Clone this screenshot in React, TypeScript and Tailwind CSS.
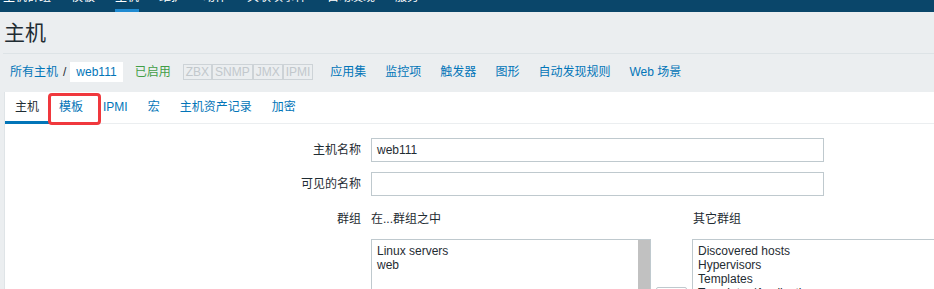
const topMenu = ['主机群组', '模板', '主机', '维护', '动作', '关联项事件', '自动发现', '服务'];
const hostLinks = ['应用集', '监控项', '触发器', '图形', '自动发现规则', 'Web 场景'];
const tabs = ['主机', '模板', 'IPMI', '宏', '主机资产记录', '加密'];
const availability = ['ZBX', 'SNMP', 'JMX', 'IPMI'];

function FormRow({ label, children }: { label: string; children: React.ReactNode }) {
  return (
    <div className="flex items-start">
      <div className="w-[356px] shrink-0 text-right leading-[24px]">{label}</div>
      <div className="ml-[10px] flex-1">{children}</div>
    </div>
  );
}

function ListBox({ items, scroll }: { items: string[]; scroll?: boolean }) {
  return (
    <div className="relative h-[150px] w-[280px] border border-[#bfc9ce] bg-white">
      <div className="px-[5px] pt-[4px] leading-[14px]">
        {items.map((item) => (
          <div key={item} className="whitespace-nowrap">
            {item}
          </div>
        ))}
      </div>
      {scroll && <div className="absolute right-0 top-0 h-full w-[12px] bg-[#c1c1c1]" />}
    </div>
  );
}

export default function App() {
  return (
    <div className="h-[289px] w-[934px] overflow-hidden bg-[#ebeef0] font-['Liberation_Sans','Noto_Sans_CJK_SC',sans-serif] text-[12px] text-[#1f2c33]">
      {/* top navigation, scrolled partly out of view */}
      <div className="h-[12px] overflow-hidden bg-[#0a466a]">
        <div className="-mt-[9px] flex gap-[20px] pl-[3px]">
          {topMenu.map((item, i) => (
            <div
              key={item}
              className={`h-[21px] whitespace-nowrap leading-[12px] text-white ${i === 2 ? 'border-b-[3px] border-[#1f8ad1]' : ''}`}
            >
              {item}
            </div>
          ))}
        </div>
      </div>

      <div className="pl-[4px] pt-[9px] text-[21px] leading-[24px]">主机</div>
      <div className="ml-[3px] mt-[8px] border-t border-[#dde3e6]" />

      {/* host navigation */}
      <div className="flex h-[38px] items-center pb-[2px] pl-[10px] text-[#0275b8]">
        <span>所有主机</span>
        <span className="ml-[5px] text-[#1f2c33]">/</span>
        <span className="ml-[4px] bg-white px-[6px] leading-[20px]">web111</span>
        <span className="ml-[12px] text-[#429e47]">已启用</span>
        <div className="ml-[12px] flex">
          {availability.map((a) => (
            <span key={a} className="border border-[#cdd3d7] px-[2px] leading-[14px] text-[#c2c8cc]">
              {a}
            </span>
          ))}
        </div>
        <div className="ml-[17px] flex gap-[19px]">
          {hostLinks.map((l) => (
            <span key={l}>{l}</span>
          ))}
        </div>
      </div>

      {/* main panel */}
      <div className="relative ml-[4px] h-[200px] border-l border-[#dfe4e7] bg-white">
        <div className="flex h-[32px] border-b border-[#ebeef0]">
          {tabs.map((t, i) => (
            <div
              key={t}
              className={`-mb-[1px] flex h-[32px] items-center border-b-[3px] px-[10px] pt-[1px] ${i === 0 ? 'border-[#0275b8] text-[#1f2c33]' : 'border-transparent text-[#0275b8]'}`}
            >
              {t}
            </div>
          ))}
        </div>
        <div className="pointer-events-none absolute left-[43px] top-[1px] h-[32px] w-[53px] rounded-[4px] border-[3px] border-[#f0383d]" />

        <div className="flex flex-col gap-[10px] pt-[14px]">
          <FormRow label="主机名称">
            <div className="h-[24px] w-[453px] border border-[#bfc9ce] px-[5px] leading-[22px]">web111</div>
          </FormRow>
          <FormRow label="可见的名称">
            <div className="h-[24px] w-[453px] border border-[#bfc9ce]" />
          </FormRow>
          <div className="flex items-start pt-[1px]">
            <div className="w-[356px] shrink-0 text-right leading-[24px]">群组</div>
            <div className="ml-[10px] flex">
              <div>
                <div className="leading-[24px]">在...群组之中</div>
                <div className="mt-[8px]">
                  <ListBox items={['Linux servers', 'web']} scroll />
                </div>
              </div>
              <div className="ml-[5px] w-[31px] pt-[80px]">
                <div className="h-[24px] w-[31px] rounded-[2px] border border-[#bfc9ce]" />
              </div>
              <div className="ml-[5px]">
                <div className="pl-[1px] leading-[24px]">其它群组</div>
                <div className="mt-[8px]">
                  <ListBox items={['Discovered hosts', 'Hypervisors', 'Templates', 'Templates/Applications']} />
                </div>
              </div>
            </div>
          </div>
        </div>
      </div>
    </div>
  );
}
